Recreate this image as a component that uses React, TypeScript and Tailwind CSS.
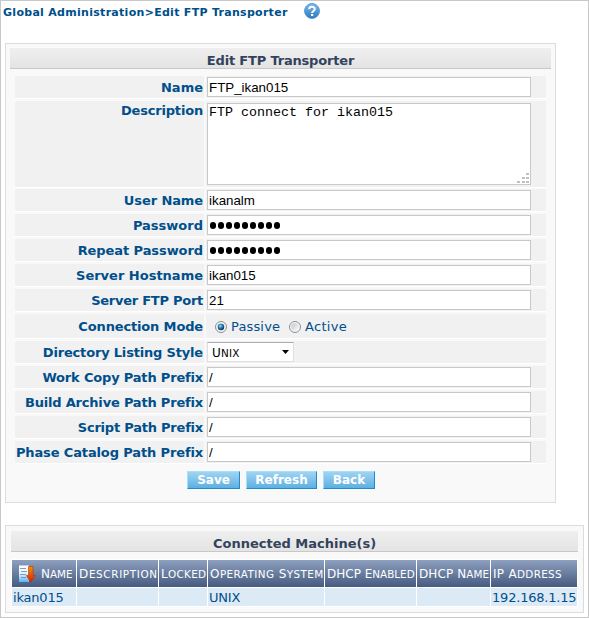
import { ReactNode } from 'react';

const inputClass = 'h-5 w-[324px] border border-[#c8c8c8] bg-white px-px text-[13.33px] leading-[18px] text-black font-["Liberation_Sans",Arial,sans-serif] outline-none';

function Row({ label, tall = 'h-[22px]', gap = 'mb-0.5', pad = 'leading-[23px]', tracking = '', children }: { label: string; tall?: string; gap?: string; pad?: string; tracking?: string; children: ReactNode }) {
  return (
    <div className={`flex gap-0.5 ${gap}`}>
      <div className={`box-content flex w-[189px] justify-end border-b border-white bg-[#f1f1f1] text-[13px] font-bold whitespace-nowrap text-[#004f8b] ${tall} ${pad}`}>
        <span className={`mr-px ${tracking}`}>{label}</span>
      </div>
      <div className={`box-content flex w-[340px] border-b border-white bg-[#f1f1f1] ${tall}`}>{children}</div>
    </div>
  );
}

function Field({ value }: { value: string }) {
  return <input className={`mt-px ml-px ${inputClass}`} defaultValue={value} />;
}

function Secret() {
  return (
    <div className={`mt-px ml-px flex items-start gap-0.5 pt-[7px] pl-0.5 ${inputClass}`}>
      {Array.from({ length: 9 }, (_, i) => (
        <span key={i} className="mt-[-1px] h-[7px] w-1.5 rounded-full bg-black" />
      ))}
    </div>
  );
}

function Radio({ on }: { on?: boolean }) {
  return (
    <svg className="mt-[7px] h-3 w-3 shrink-0" viewBox="0 0 12 12">
      <defs>
        <linearGradient id="well" x1="0" y1="0" x2="1" y2="1">
          <stop offset="0" stopColor="#c2c5ca" />
          <stop offset="1" stopColor="#fafafa" />
        </linearGradient>
        <radialGradient id="dot" cx=".4" cy=".35" r=".65">
          <stop offset="0" stopColor="#b5e8fb" />
          <stop offset=".4" stopColor="#2c8fc5" />
          <stop offset="1" stopColor="#0b2f56" />
        </radialGradient>
      </defs>
      <circle cx="6" cy="6" r="5.5" fill="#f6f6f6" stroke="#8b8f94" />
      <circle cx="6" cy="6" r="3.8" fill="url(#well)" />
      {on && <circle cx="6" cy="6" r="3.2" fill="url(#dot)" />}
    </svg>
  );
}

function Button({ text, size }: { text: string; size: string }) {
  return (
    <button className={`h-[18px] border border-t-[#a5e1f8] border-r-[#1d8bcf] border-b-[#1d8bcf] border-l-[#a5e1f8] bg-linear-to-b from-[#a0d3f1] to-[#5cb0e2] text-center text-[12px] leading-[17px] font-bold whitespace-nowrap text-white ${size}`}>
      {text}
    </button>
  );
}

function SmallCaps({ text, small = 'text-[10.4px]' }: { text: string; small?: string }) {
  return (
    <>
      {text.split(' ').map((word, i) => (
        <span key={i}>
          {i > 0 && ' '}
          {word === 'DHCP' || word === 'IP' ? word : <>{word[0]}<span className={`uppercase ${small}`}>{word.slice(1)}</span></>}
        </span>
      ))}
    </>
  );
}

function HelpIcon() {
  return (
    <svg className="h-4 w-4" viewBox="0 0 16 16">
      <defs>
        <linearGradient id="help" x1="0" y1="0" x2="0" y2="1">
          <stop offset="0" stopColor="#7db9e8" />
          <stop offset="1" stopColor="#2a79be" />
        </linearGradient>
      </defs>
      <circle cx="8" cy="8" r="7.5" fill="url(#help)" stroke="#5e9fd2" />
      <path d="M5.2 6.2C5.2 3 10.8 3 10.8 6.1C10.8 8 8.1 8 8.1 10" fill="none" stroke="#fff" strokeWidth="2" />
      <rect x="7" y="11" width="2.2" height="2" fill="#fff" />
    </svg>
  );
}

function SortIcon() {
  return (
    <svg className="h-[18px] w-[17px] shrink-0" viewBox="0 0 17 18">
      <defs>
        <linearGradient id="page" x1="0" y1="0" x2="0" y2="1">
          <stop offset="0" stopColor="#ffffff" />
          <stop offset=".5" stopColor="#e2f2fe" />
          <stop offset="1" stopColor="#55b4f5" />
        </linearGradient>
        <linearGradient id="arrow" x1="0" y1="0" x2="0" y2="1">
          <stop offset="0" stopColor="#f59100" />
          <stop offset="1" stopColor="#d81e05" />
        </linearGradient>
      </defs>
      <path d="M0 .5H10V17H0Z" fill="url(#page)" />
      <path d="M1 3.5H7M2 6.5H8M1 9.5H7M2 12.5H7" stroke="#6684ad" strokeWidth=".8" />
      <path d="M9.5 1.5H14V10.5H16.3L11.8 17.3L7.3 10.5H9.5Z" fill="url(#arrow)" stroke="#b9330c" strokeWidth=".6" />
    </svg>
  );
}

const columns = [
  { name: 'Description', width: 'w-[81px]', value: '', tracking: 'tracking-[0.65px]' },
  { name: 'Locked', width: 'w-12', value: '', tracking: 'tracking-[0.3px]' },
  { name: 'Operating System', width: 'w-[116px]', value: 'UNIX', tracking: 'tracking-[0.42px]' },
  { name: 'DHCP Enabled', width: 'w-[91px]', value: '', tracking: '' },
  { name: 'DHCP Name', width: 'w-[73px]', value: '', tracking: 'tracking-[0.1px]' },
  { name: 'IP Address', width: 'w-[86px]', value: '192.168.1.15', tracking: 'tracking-[0.3px]' },
];

export default function App() {
  return (
    <div className='h-[618px] w-[589px] overflow-hidden border border-[#c8c8c8] bg-white pl-1 font-["DejaVu_Sans",Verdana,sans-serif]'>
      <header className="flex h-[42px] items-start text-[11px] font-bold text-[#004f8b]">
        <span className="mt-1 -ml-0.5 w-[301px] leading-4 tracking-[0.29px] whitespace-nowrap">Global Administration&gt;Edit FTP Transporter</span>
        <div className="mt-0.5"><HelpIcon /></div>
      </header>

      <section className="h-[460px] w-[551px] border border-[#dcdcdc] bg-[#f9f9f9] px-1 pt-1">
        <h1 className="h-[21px] border-b border-[#c8c8c8] bg-linear-to-b from-[#efefef] to-[#e4e4e4] text-center text-[13px] leading-[25px] font-bold tracking-[-0.18px] text-[#32435c]">Edit FTP Transporter</h1>
        <div className="mt-[7px] ml-[5px]">
          <Row label="Name"><Field value="FTP_ikan015" /></Row>
          <Row label="Description" tall="h-[86px]" gap="mb-px" pad="leading-5" tracking="tracking-[-0.18px]">
            <div className='relative mt-0.5 ml-px h-[82px] w-[324px] border border-[#c8c8c8] bg-white pt-px pl-px font-["Liberation_Mono","Courier_New",monospace] text-[13.33px] leading-4 text-black'>
              FTP connect for ikan015
              <svg className="absolute right-px bottom-0 h-3 w-3" viewBox="0 0 12 12">
                <path d="M9 1h3v2H9zM5 5h3v2H5zM9 5h3v2H9zM0 9h3v2H0zM5 9h3v2H5zM9 9h3v2H9z" fill="#c0c0c0" />
              </svg>
            </div>
          </Row>
          <Row label="User Name" tracking="tracking-[-0.1px]"><Field value="ikanalm" /></Row>
          <Row label="Password"><Secret /></Row>
          <Row label="Repeat Password" tracking="tracking-[-0.08px]"><Secret /></Row>
          <Row label="Server Hostname"><Field value="ikan015" /></Row>
          <Row label="Server FTP Port" tracking="tracking-[-0.26px]"><Field value="21" /></Row>
          <Row label="Connection Mode" tall="h-6" pad="leading-[25px]" tracking="tracking-[-0.15px]">
            <div className="ml-[9px] flex text-[13px] leading-[25px] text-[#004f8b]">
              <Radio on /><span className="ml-[3px] w-[59px] pl-px tracking-[0.15px]">Passive</span>
              <Radio /><span className="ml-1 tracking-[0.3px]">Active</span>
            </div>
          </Row>
          <Row label="Directory Listing Style" tracking="tracking-[-0.18px]">
            <div className="mt-px ml-px flex h-5 w-[87px] items-center justify-between border border-[#dddfe5] border-t-[#abadb3] bg-white px-1 text-[12px] text-black">
              <span className="pt-px tracking-[0.2px]"><SmallCaps text="Unix" /></span>
              <svg className="h-1 w-[7px]" viewBox="0 0 7 4"><path d="M0 0h7L3.5 4z" fill="#000" /></svg>
            </div>
          </Row>
          <Row label="Work Copy Path Prefix" tracking="tracking-[-0.18px]"><Field value="/" /></Row>
          <Row label="Build Archive Path Prefix" tracking="tracking-[-0.19px]"><Field value="/" /></Row>
          <Row label="Script Path Prefix" tracking="tracking-[-0.22px]"><Field value="/" /></Row>
          <Row label="Phase Catalog Path Prefix" tracking="tracking-[-0.13px]"><Field value="/" /></Row>
        </div>
        <div className="mt-[7px] ml-[177px] flex gap-1.5">
          <Button text="Save" size="w-[53px]" />
          <Button text="Refresh" size="w-[71px]" />
          <Button text="Back" size="w-[52px]" />
        </div>
      </section>

      <section className="mt-[22px] h-[88px] w-[579px] border border-[#dcdcdc] bg-[#f9f9f9] px-[5px] pt-[5px]">
        <h2 className="h-[21px] border-b border-[#c8c8c8] bg-linear-to-b from-[#efefef] to-[#e4e4e4] text-center text-[13px] leading-[25px] font-bold text-[#32435c]">Connected Machine(s)</h2>
        <div className="mt-[7px] flex w-[567px] gap-px border border-white bg-white">
          <div className="w-16 shrink-0">
            <div className="flex h-[27px] items-center bg-linear-to-b from-[#8ea0bf] to-[#465b80] pl-[7px] text-[12px] text-white">
              <SortIcon /><span className="ml-[5px] whitespace-nowrap"><SmallCaps text="Name" /></span>
            </div>
            <div className="mt-px h-[18px] bg-[#dceaf6] pl-px text-[13px] leading-[19px] tracking-[-0.2px] text-[#004f8b]">ikan015</div>
          </div>
          {columns.map((c) => (
            <div key={c.name} className={`shrink-0 ${c.width}`}>
              <div className={`h-[27px] bg-linear-to-b from-[#8ea0bf] to-[#465b80] pl-0.5 text-[12px] leading-[29px] whitespace-nowrap text-white ${c.tracking}`}><SmallCaps text={c.name} /></div>
              <div className="mt-px h-[18px] bg-[#dceaf6] pl-px text-[13px] leading-[19px] tracking-[-0.2px] whitespace-nowrap text-[#004f8b]">{c.value}</div>
            </div>
          ))}
        </div>
      </section>
    </div>
  );
}
